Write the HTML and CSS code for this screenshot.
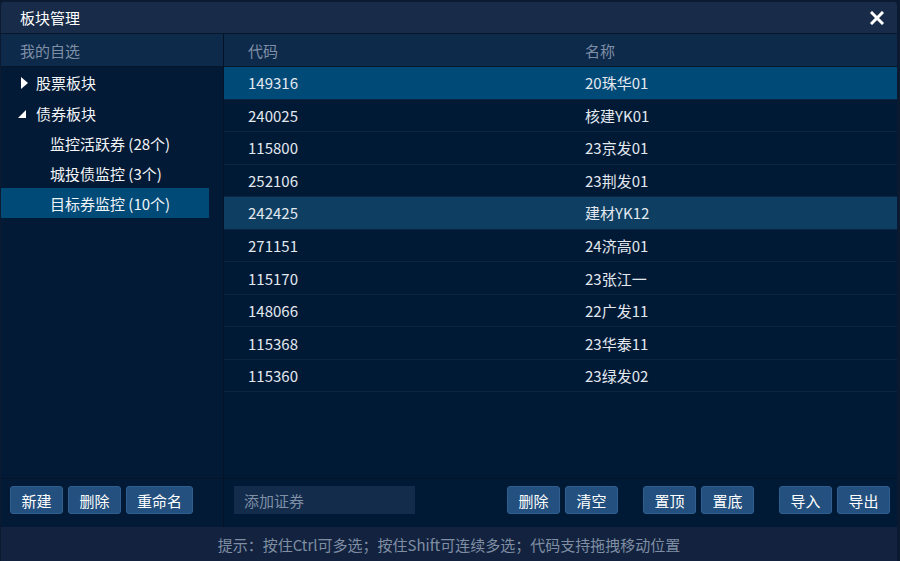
FILE: index.html
```html
<!DOCTYPE html>
<html lang="zh-CN">
<head>
    <meta charset="UTF-8">
    <title>板块管理</title>
    <link rel="stylesheet" href="styles.css">
</head>
<body>
    <div class="dialog">
        <div class="titlebar">
            <span class="title">板块管理</span>
            <span class="close">
                <svg width="14" height="14" viewBox="0 0 14 14"><path d="M2 2 L12 12 M12 2 L2 12" stroke="#fff" stroke-width="3" stroke-linecap="square"/></svg>
            </span>
        </div>

        <div class="main">
            <div class="left">
                <div class="panel-head">我的自选</div>
                <div class="tree">
                    <div class="node"><span class="arrow collapsed"></span><span>股票板块</span></div>
                    <div class="node"><span class="arrow expanded"></span><span>债券板块</span></div>
                    <div class="leaf">监控活跃券 (28个)</div>
                    <div class="leaf">城投债监控 (3个)</div>
                    <div class="leaf active">目标券监控 (10个)</div>
                </div>
                <div class="toolbar">
                    <button class="btn">新建</button>
                    <button class="btn">删除</button>
                    <button class="btn">重命名</button>
                </div>
            </div>

            <div class="right">
                <div class="table-head">
                    <div class="col-code">代码</div>
                    <div class="col-name">名称</div>
                </div>
                <div class="rows">
                    <div class="row selected"><div class="col-code">149316</div><div class="col-name">20珠华01</div></div>
                    <div class="row"><div class="col-code">240025</div><div class="col-name">核建YK01</div></div>
                    <div class="row"><div class="col-code">115800</div><div class="col-name">23京发01</div></div>
                    <div class="row"><div class="col-code">252106</div><div class="col-name">23荆发01</div></div>
                    <div class="row hover"><div class="col-code">242425</div><div class="col-name">建材YK12</div></div>
                    <div class="row"><div class="col-code">271151</div><div class="col-name">24济高01</div></div>
                    <div class="row"><div class="col-code">115170</div><div class="col-name">23张江一</div></div>
                    <div class="row"><div class="col-code">148066</div><div class="col-name">22广发11</div></div>
                    <div class="row"><div class="col-code">115368</div><div class="col-name">23华泰11</div></div>
                    <div class="row"><div class="col-code">115360</div><div class="col-name">23绿发02</div></div>
                </div>
                <div class="toolbar">
                    <input class="add-input" type="text" placeholder="添加证券">
                    <div class="spacer"></div>
                    <div class="group">
                        <button class="btn">删除</button>
                        <button class="btn">清空</button>
                    </div>
                    <div class="group">
                        <button class="btn">置顶</button>
                        <button class="btn">置底</button>
                    </div>
                    <div class="group">
                        <button class="btn">导入</button>
                        <button class="btn">导出</button>
                    </div>
                </div>
            </div>
        </div>

        <div class="footer">提示：按住Ctrl可多选；按住Shift可连续多选；代码支持拖拽移动位置</div>
    </div>
</body>
</html>
```

FILE: styles.css
```css
body {
    margin: 0;
    padding: 2px 3px 0 1px;
    background: #0b1a30;
    font-family: "Noto Sans CJK SC", "Noto Sans", sans-serif;
    font-size: 15px;
    color: #e3e8ef;
}

.dialog {
    height: 559px;
    display: flex;
    flex-direction: column;
    background: #001a36;
    border-radius: 3px 3px 0 0;
    overflow: hidden;
}

.titlebar {
    height: 31px;
    flex: none;
    display: flex;
    align-items: center;
    justify-content: space-between;
    padding: 0 13px 0 19px;
    background: #182b48;
    border-bottom: 1px solid #08162b;
}

.title {
    color: #fff;
}

.close {
    display: flex;
    align-items: center;
}

.main {
    flex: 1;
    display: flex;
    min-height: 0;
}

.left {
    width: 222px;
    flex: none;
    display: flex;
    flex-direction: column;
    border-right: 1px solid #051327;
    background: #021a35;
}

.panel-head,
.table-head {
    height: 32px;
    flex: none;
    display: flex;
    align-items: center;
    background: #0e2a4b;
    border-bottom: 1px solid #06152a;
    color: #7f8fa5;
}

.panel-head {
    padding-left: 19px;
}

.tree {
    flex: 1;
    padding: 0 14px 0 0;
}

.node {
    height: 30px;
    display: flex;
    align-items: center;
    padding-left: 17px;
    color: #f2f5f8;
}

.node:first-child {
    height: 31px;
}

.arrow {
    flex: none;
    width: 0;
    height: 0;
}

.arrow.collapsed {
    margin: 0 8px 0 3px;
    border-top: 6px solid transparent;
    border-bottom: 6px solid transparent;
    border-left: 7px solid #fff;
}

.arrow.expanded {
    margin: 1px 10px 0 0;
    border-left: 8px solid transparent;
    border-bottom: 8px solid #fff;
}

.leaf {
    height: 30px;
    display: flex;
    align-items: center;
    padding-left: 49px;
    color: #f2f5f8;
}

.leaf.active {
    background: #004a78;
}

.right {
    flex: 1;
    display: flex;
    flex-direction: column;
    min-width: 0;
}

.col-code {
    width: 361px;
    padding-left: 24px;
    box-sizing: border-box;
}

.col-name {
    flex: 1;
}

.rows {
    flex: 1;
}

.row {
    height: 32.55px;
    box-sizing: border-box;
    display: flex;
    align-items: center;
    border-bottom: 1px solid #0a2442;
    color: #e3e8ef;
}

.row.selected {
    background: #004a78;
}

.row.hover {
    background: #0e3f62;
}

.toolbar {
    height: 41px;
    flex: none;
    display: flex;
    align-items: flex-start;
    padding: 7px 0 0 9px;
    gap: 5px;
    border-top: 1px solid #06142a;
    background: #001a36;
}

.left .toolbar {
    background: #021a35;
}

.right .toolbar {
    padding: 7px 7px 0 10px;
    gap: 0;
}

.spacer {
    flex: 1;
}

.group {
    display: flex;
    gap: 5px;
    margin-left: 25px;
}

.btn {
    height: 28px;
    padding: 0 10px;
    min-width: 53px;
    background: #23507e;
    border: 1px solid #2f5f90;
    border-radius: 3px;
    color: #fff;
    font-family: inherit;
    font-size: 15px;
    line-height: 1;
}

.add-input {
    width: 181px;
    height: 28px;
    box-sizing: border-box;
    padding: 0 10px;
    background: #132c4c;
    border: none;
    color: #e3e8ef;
    font-family: inherit;
    font-size: 15px;
    outline: none;
}

.add-input::placeholder {
    color: #7f8fa5;
}

.footer {
    height: 34px;
    flex: none;
    display: flex;
    align-items: center;
    justify-content: center;
    background: #13233f;
    color: #7f8ea3;
}
```
